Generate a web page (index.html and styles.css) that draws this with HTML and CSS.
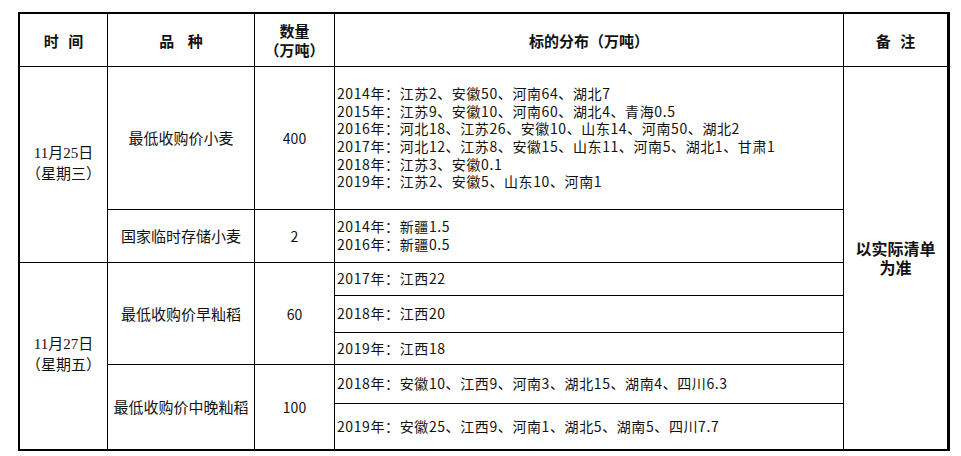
FILE: index.html
```html
<!DOCTYPE html>
<html lang="zh-CN">
<head>
<meta charset="utf-8">
<title>标的分布</title>
<link rel="stylesheet" href="styles.css">
</head>
<body>
<table class="grid">
  <colgroup>
    <col class="c1"><col class="c2"><col class="c3"><col class="c4"><col class="c5">
  </colgroup>
  <tr class="r-head">
    <th class="h-time">时 间</th>
    <th class="h-kind">品 种</th>
    <th>数量<br>（万吨）</th>
    <th>标的分布（万吨）</th>
    <th class="h-note last">备 注</th>
  </tr>
  <tr class="r1">
    <td class="date" rowspan="2">11月25日<br>（星期三）</td>
    <td class="kind">最低收购价小麦</td>
    <td class="qty">400</td>
    <td class="dist">2014年：江苏2、安徽50、河南64、湖北7<br>2015年：江苏9、安徽10、河南60、湖北4、青海0.5<br>2016年：河北18、江苏26、安徽10、山东14、河南50、湖北2<br>2017年：河北12、江苏8、安徽15、山东11、河南5、湖北1、甘肃1<br>2018年：江苏3、安徽0.1<br>2019年：江苏2、安徽5、山东10、河南1</td>
    <td class="note last bottom" rowspan="7">以实际清单<br>为准</td>
  </tr>
  <tr class="r2">
    <td class="kind">国家临时存储小麦</td>
    <td class="qty">2</td>
    <td class="dist">2014年：新疆1.5<br>2016年：新疆0.5</td>
  </tr>
  <tr class="r3">
    <td class="date bottom" rowspan="5">11月27日<br>（星期五）</td>
    <td class="kind" rowspan="3">最低收购价早籼稻</td>
    <td class="qty" rowspan="3">60</td>
    <td class="dist">2017年：江西22</td>
  </tr>
  <tr class="r4">
    <td class="dist">2018年：江西20</td>
  </tr>
  <tr class="r5">
    <td class="dist">2019年：江西18</td>
  </tr>
  <tr class="r6">
    <td class="kind bottom" rowspan="2">最低收购价中晚籼稻</td>
    <td class="qty bottom" rowspan="2">100</td>
    <td class="dist">2018年：安徽10、江西9、河南3、湖北15、湖南4、四川6.3</td>
  </tr>
  <tr class="r7">
    <td class="dist bottom">2019年：安徽25、江西9、河南1、湖北5、湖南5、四川7.7</td>
  </tr>
</table>
</body>
</html>
```

FILE: styles.css
```css
html, body {
  margin: 0;
  padding: 0;
  background: #ffffff;
}

body {
  padding: 12px 0 0 18px;
  font-family: "Noto Sans CJK SC", sans-serif;
  color: #111111;
  text-spacing-trim: space-all;
}

.grid {
  border-collapse: separate;
  border-spacing: 0;
  table-layout: fixed;
  width: 932px;
  border-top: 2px solid #000;
  border-left: 2px solid #000;
  border-right: 3px solid #000;
  border-bottom: 2px solid #000;
}

.c1 { width: 88px; }
.c2 { width: 147px; }
.c3 { width: 80px; }
.c4 { width: 509px; }
.c5 { width: 103px; }

th, td {
  box-sizing: border-box;
  padding: 0;
  border-right: 1px solid #000;
  border-bottom: 1px solid #000;
  vertical-align: middle;
  text-align: center;
}

th.last, td.last { border-right: none; }
td.bottom { border-bottom: none; }

th {
  font-weight: 700;
  font-size: 15px;
  line-height: 19px;
}

.h-time { word-spacing: 6px; }
.h-kind { word-spacing: 10px; }
.h-note { word-spacing: 6px; }

.r-head { height: 53px; }
.r1 { height: 143px; }
.r2 { height: 53px; }
.r3 { height: 33px; }
.r4 { height: 37px; }
.r5 { height: 32px; }
.r6 { height: 39px; }
.r7 { height: 45px; }

.date {
  font-family: "Liberation Serif", "Noto Sans CJK SC", serif;
  font-size: 15px;
  line-height: 21px;
  padding-bottom: 2px;
}

.kind {
  font-size: 15px;
  line-height: 18px;
}

.qty {
  font-size: 14px;
  line-height: 18px;
}

.dist {
  text-align: left;
  padding-left: 2px;
  font-size: 14px;
  letter-spacing: 0.6px;
  line-height: 17.6px;
  white-space: nowrap;
}

.note {
  font-weight: 700;
  font-size: 16px;
  line-height: 19px;
}
```
